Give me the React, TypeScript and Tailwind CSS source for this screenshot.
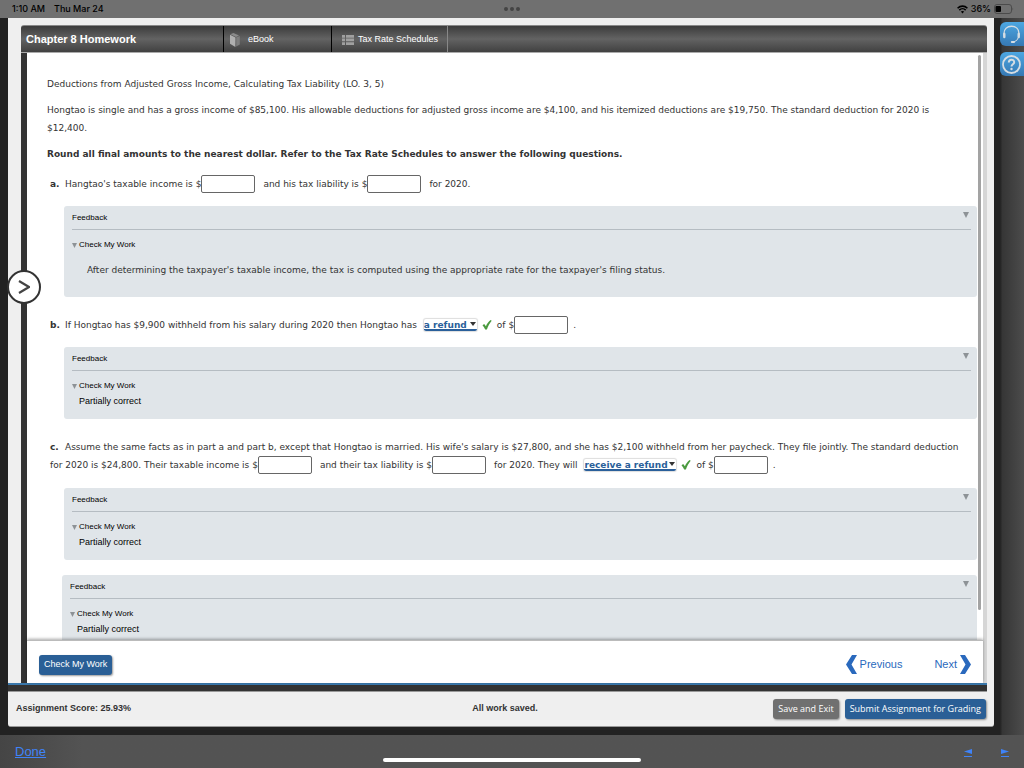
import { useState } from 'react';
import type { ReactNode } from 'react';

const verdana = "font-['DejaVu_Sans',sans-serif]";

function AmountInput({ label }: { label: string }) {
  return (
    <input
      type="text"
      aria-label={label}
      className="w-[54px] h-[18px] shrink-0 bg-white border border-[#666] rounded-[2px] px-1 text-[9px] text-[#333]"
    />
  );
}

function CheckMark() {
  return (
    <svg className="w-[10px] h-[10px] shrink-0 mx-[5px]" viewBox="0 0 10 10" aria-hidden="true">
      <path d="M0.5 5.2L2.2 3.9L3.9 6.2C5.1 3.6 6.6 1.6 8.6 0L9.7 0.8C7.6 3.3 6.1 6 4.9 9.6H3.2C2.5 7.8 1.6 6.4 0.5 5.2Z" fill="#4a9a3f" />
    </svg>
  );
}

interface AnswerSelectProps {
  label: string;
  options: string[];
  width: string;
}

function AnswerSelect({ label, options, width }: AnswerSelectProps) {
  const [value, setValue] = useState(options[0]);

  return (
    <span className={`relative inline-flex shrink-0 h-[12px] ml-1 border-b-2 border-[#2a5f9a] rounded-[2px] shadow-[0_0_1px_1px_#ddd] ${width}`}>
      <select
        aria-label={label}
        value={value}
        onChange={(e) => setValue(e.target.value)}
        className="appearance-none w-full h-[12px] leading-[12px] bg-transparent text-[9px] font-bold text-[#2a5f9a] underline"
      >
        {options.map((option) => (
          <option key={option}>{option}</option>
        ))}
      </select>
      <svg className="absolute right-px top-[3px] w-[6px] h-[4px] pointer-events-none" viewBox="0 0 6 4">
        <path d="M0 0H6L3 4Z" fill="#333" />
      </svg>
    </span>
  );
}

function Triangle({ className }: { className: string }) {
  return (
    <svg className={className} viewBox="0 0 6 6" aria-hidden="true">
      <path d="M0 0H6L3 6Z" fill="#8d9296" />
    </svg>
  );
}

interface FeedbackProps {
  className: string;
  children: ReactNode;
}

function Feedback({ className, children }: FeedbackProps) {
  return (
    <section className={`bg-[#e0e5e9] rounded-[3px] pl-2 pr-[6px] pt-[6px] font-['Liberation_Sans',sans-serif] text-black ${className}`}>
      <div className="flex items-start justify-between h-[18px] border-b border-[#b5bcc2] text-[8px] leading-[12px]">
        <h3>Feedback</h3>
        <Triangle className="w-[6px] h-[6px] mr-[2px]" />
      </div>
      <div className="flex items-center gap-[2px] mt-[9px] text-[8px] leading-[12px]">
        <Triangle className="w-[5px] h-[5px]" />
        <h4>Check My Work</h4>
      </div>
      {children}
    </section>
  );
}

function PartiallyCorrect() {
  return <p className="mt-[3px] ml-[7px] text-[9px] leading-[12px]">Partially correct</p>;
}

function StatusBar() {
  return (
    <div className="relative flex items-center justify-between h-[18px] shrink-0 bg-[#707070] pl-3 pr-[10px] font-['Inter',sans-serif] text-[9px] font-medium text-black">
      <div className="flex gap-[9px]">
        <span>1:10 AM</span>
        <span>Thu Mar 24</span>
      </div>
      <div className="absolute left-1/2 -translate-x-1/2 flex gap-[2px]">
        <span className="w-1 h-1 rounded-full bg-[#444]" />
        <span className="w-1 h-1 rounded-full bg-[#444]" />
        <span className="w-1 h-1 rounded-full bg-[#444]" />
      </div>
      <div className="flex items-center gap-[3px]">
        <svg className="w-[11px] h-[9px]" viewBox="0 0 11 9" fill="none" stroke="#000" strokeWidth="1.6">
          <path d="M0.6 3.2C3.4 0.4 7.6 0.4 10.4 3.2" />
          <path d="M2.3 5.1C4.2 3.2 6.8 3.2 8.7 5.1" />
          <path d="M3.8 6.6C4.8 5.7 6.2 5.7 7.2 6.6L5.5 8.4Z" fill="#000" stroke="none" />
        </svg>
        <span>36%</span>
        <svg className="w-5 h-[10px]" viewBox="0 0 20 10">
          <rect x="0.5" y="0.5" width="17" height="9" rx="2.5" fill="none" stroke="#4b4b4b" />
          <rect x="1.5" y="2" width="5.5" height="6" rx="1" fill="#000" />
          <path d="M18.5 3.5Q20 5 18.5 6.5Z" fill="#4b4b4b" />
        </svg>
      </div>
    </div>
  );
}

function Header() {
  return (
    <header className="flex items-stretch h-[28px] shrink-0 mt-[7px] ml-[13px] mr-[7px] rounded-t-[3px] border-t border-b border-t-[#888] border-b-[#aaa] bg-linear-to-b from-[#3c3c3c] via-[#636363] to-[#414141] font-['Liberation_Sans',sans-serif] text-white text-[9px]">
      <h1 className="flex items-center w-[202px] pl-[5px] text-[11px] font-bold">Chapter 8 Homework</h1>
      <a href="#ebook" className="flex items-center w-[108px] pt-[2px] pl-[6px] gap-2 border-l border-black">
        <svg className="w-[10px] h-[14px]" viewBox="0 0 10 14">
          <path d="M0 1.8L5.4 4.6V14L0 10.8Z" fill="#b0b0b0" />
          <path d="M0.4 1.2L3.4 0L9 2.6L6 3.9Z" fill="#8a8a8a" />
          <path d="M6.2 4.4L9.8 3V11.6L6.2 13.6Z" fill="#7e7e7e" />
        </svg>
        eBook
      </a>
      <a href="#schedules" className="flex items-center w-[117px] pt-[2px] pl-[10px] gap-1 border-l border-black border-r border-r-[#888]">
        <svg className="w-3 h-[10px]" viewBox="0 0 12 10" fill="#a0a0a0">
          <path d="M0 0H3V2.7H0ZM4 0H12V2.7H4ZM0 3.6H3V6.3H0ZM4 3.6H12V6.3H4ZM0 7.2H3V9.9H0ZM4 7.2H12V9.9H4Z" />
        </svg>
        Tax Rate Schedules
      </a>
    </header>
  );
}

function Questions() {
  return (
    <div className={`pl-5 pt-[22px] text-[9px] leading-[18px] text-[#333] ${verdana}`}>
      <h2>Deductions from Adjusted Gross Income, Calculating Tax Liability (LO. 3, 5)</h2>
      <p className="mt-2 pr-10">
        Hongtao is single and has a gross income of $85,100. His allowable deductions for adjusted gross income are $4,100, and his itemized deductions are $19,750. The standard deduction for 2020 is $12,400.
      </p>
      <p className="mt-2 font-bold">Round all final amounts to the nearest dollar. Refer to the Tax Rate Schedules to answer the following questions.</p>

      <div className="flex items-center mt-3 pl-[3px] whitespace-pre">
        <b className="w-[15px] shrink-0">a.</b>
        <span>Hangtao's taxable income is $</span>
        <AmountInput label="Taxable income" />
        <span className="ml-2">and his tax liability is $</span>
        <AmountInput label="Tax liability" />
        <span className="ml-2">for 2020.</span>
      </div>
      <Feedback className="mt-[13px] ml-[17px] mr-[6px] h-[91px]">
        <p className={`mt-[10px] ml-[15px] text-[9px] leading-[18px] text-[#333] ${verdana}`}>
          After determining the taxpayer's taxable income, the tax is computed using the appropriate rate for the taxpayer's filing status.
        </p>
      </Feedback>

      <div className="flex items-center mt-[19px] pl-[3px] whitespace-pre">
        <b className="w-[15px] shrink-0">b.</b>
        <span>If Hongtao has $9,900 withheld from his salary during 2020 then Hongtao has </span>
        <AnswerSelect label="Refund or balance due" options={['a refund', 'a balance due']} width="w-[53px]" />
        <CheckMark />
        <span>of $</span>
        <AmountInput label="Refund amount" />
        <span className="ml-[5px]">.</span>
      </div>
      <Feedback className="mt-[13px] ml-[17px] mr-[6px] h-[72px]">
        <PartiallyCorrect />
      </Feedback>

      <div className="mt-[19px] pl-[3px] whitespace-pre">
        <div className="flex">
          <b className="w-[15px] shrink-0">c.</b>
          <span>Assume the same facts as in part a and part b, except that Hongtao is married. His wife's salary is $27,800, and she has $2,100 withheld from her paycheck. They file jointly. The standard deduction</span>
        </div>
        <div className="flex items-center">
          <span>for 2020 is $24,800. Their taxable income is $</span>
          <AmountInput label="Joint taxable income" />
          <span className="ml-2">and their tax liability is $</span>
          <AmountInput label="Joint tax liability" />
          <span className="ml-2">for 2020. They will </span>
          <AnswerSelect label="Joint refund or balance due" options={['receive a refund', 'owe a balance']} width="w-[92px]" />
          <CheckMark />
          <span>of $</span>
          <AmountInput label="Joint refund amount" />
          <span className="ml-[5px]">.</span>
        </div>
      </div>
      <Feedback className="mt-[14px] ml-[17px] mr-[6px] h-[72px]">
        <PartiallyCorrect />
      </Feedback>
      <Feedback className="mt-[15px] ml-[15px] mr-[6px] h-[72px]">
        <PartiallyCorrect />
      </Feedback>
    </div>
  );
}

function SideTools() {
  return (
    <aside className="w-6 shrink-0 flex flex-col gap-[6px] pt-1 bg-linear-to-r from-[#222] via-[#363636] via-10% to-[#4c4c4c]">
      <button aria-label="Support" className="h-6 pl-[2px] rounded-l-[6px] bg-linear-to-b from-[#4da7e2] to-[#3679b4]">
        <svg className="w-[19px] h-[19px]" viewBox="0 0 19 19" fill="none" stroke="#d5dde3" strokeLinecap="round">
          <path d="M2 10V8.5C2 4 5.2 1.2 9.5 1.2S17 4 17 8.5V10" strokeWidth="1.4" />
          <path d="M2.3 9V12M16.7 9V12" strokeWidth="2.4" />
          <path d="M16.5 12.5Q15.5 16 12 17" strokeWidth="1" />
          <path d="M9.8 17H12" strokeWidth="2" />
        </svg>
      </button>
      <button aria-label="Help" className="h-6 pl-[2px] rounded-l-[6px] bg-linear-to-b from-[#4da7e2] to-[#3679b4]">
        <svg className="w-[19px] h-[19px]" viewBox="0 0 19 19" fill="none" stroke="#d5dde3">
          <circle cx="9.5" cy="9.5" r="8.5" strokeWidth="1.8" />
          <path d="M6.8 7.5C6.8 3.8 12.2 3.8 12.2 7.2C12.2 9.3 9.5 9.2 9.5 11.5" strokeWidth="2" />
          <circle cx="9.5" cy="14" r="1.2" fill="#d5dde3" stroke="none" />
        </svg>
      </button>
    </aside>
  );
}

export default function App() {
  return (
    <div className="flex flex-col h-screen overflow-hidden bg-[#222] font-['Liberation_Sans',sans-serif]">
      <StatusBar />

      <div className="flex flex-1 min-h-0">
        <div className="relative flex flex-col flex-1 min-w-0 ml-2 mr-[6px] mb-2 rounded-b-[3px] bg-[#efefef] border-b border-[#999]">
          <Header />

          <div className="flex flex-col flex-1 min-h-0 ml-[13px] mr-[7px] border-l-[6px] border-l-[#333] border-r-4 border-r-[#d6d6d6] bg-white">
            <main className="relative flex-1 min-h-0 overflow-hidden">
              <Questions />
              <div className="absolute right-[2px] top-[2px] bottom-[30px] w-[3px] rounded-full bg-[#a3a3a3]" />
            </main>
            <div className="relative flex items-center justify-between h-[43px] shrink-0 pl-3 pr-3 pt-[5px] bg-white border-t border-[#bbb] shadow-[0_-1px_3px_rgba(0,0,0,0.35)]">
              <button className="h-5 px-[5px] rounded-[3px] bg-[#2a5f96] text-white text-[9px] shadow-[1px_1px_2px_rgba(0,0,0,0.4)]">Check My Work</button>
              <nav className="flex items-center gap-8 text-[11px] text-[#2a69bd]">
                <a href="#previous" className="flex items-center gap-[3px]">
                  <svg className="w-[11px] h-[19px]" viewBox="0 0 11 19">
                    <path d="M6 0H11L5.5 9.5L11 19H6L0 9.5Z" fill="#2a69bd" />
                  </svg>
                  Previous
                </a>
                <a href="#next" className="flex items-center gap-[3px]">
                  Next
                  <svg className="w-[11px] h-[19px]" viewBox="0 0 11 19">
                    <path d="M5 0H0L5.5 9.5L0 19H5L11 9.5Z" fill="#2a69bd" />
                  </svg>
                </a>
              </nav>
            </div>
          </div>

          <div className="h-[9px] shrink-0 mr-[7px] bg-[#333] border-t-2 border-t-[#3a78ac] border-b border-b-[#999]" />

          <footer className="grid grid-cols-3 items-center h-[34px] shrink-0 px-2 text-[9px] font-bold text-[#333]">
            <span>Assignment Score: 25.93%</span>
            <span className="pl-2 text-center">All work saved.</span>
            <div className="flex justify-end gap-[6px] font-['Open_Sans',sans-serif] text-[9px] font-normal text-white whitespace-nowrap">
              <button className="h-5 px-[5px] rounded-[3px] bg-[#707070] shadow-[1px_1px_2px_rgba(0,0,0,0.4)]">Save and Exit</button>
              <button className="h-5 px-[5px] rounded-[3px] bg-[#2a5f96] shadow-[1px_1px_2px_rgba(0,0,0,0.4)]">Submit Assignment for Grading</button>
            </div>
          </footer>

          <button aria-label="Open navigation" className="absolute -left-px top-[252px] flex items-center justify-center w-[34px] h-[34px] rounded-full bg-white border-2 border-[#333]">
            <svg className="w-3 h-[14px]" viewBox="0 0 12 14" fill="none" stroke="#444" strokeWidth="2.2">
              <path d="M1 1L11 7L1 13" />
            </svg>
          </button>
        </div>

        <SideTools />
      </div>

      <div className="relative flex items-center justify-between h-[33px] shrink-0 px-[15px] bg-linear-to-r from-[#454545] via-[#535353] via-8% to-[#535353] text-[#3f83f8]">
        <a href="#done" className="text-[13px] underline">Done</a>
        <nav className="flex gap-[29px] pt-[3px]">
          <a href="#back" aria-label="Back" className="pb-[2px] border-b border-[#3f83f8]">
            <svg className="w-2 h-[5px]" viewBox="0 0 8 5"><path d="M8 0V5L0 2.5Z" fill="#3f83f8" /></svg>
          </a>
          <a href="#forward" aria-label="Forward" className="pb-[2px] border-b border-[#3f83f8]">
            <svg className="w-2 h-[5px]" viewBox="0 0 8 5"><path d="M0 0V5L8 2.5Z" fill="#3f83f8" /></svg>
          </a>
        </nav>
        <div className="absolute left-1/2 -translate-x-1/2 bottom-[6px] w-[258px] h-1 rounded-full bg-white" />
      </div>
    </div>
  );
}
